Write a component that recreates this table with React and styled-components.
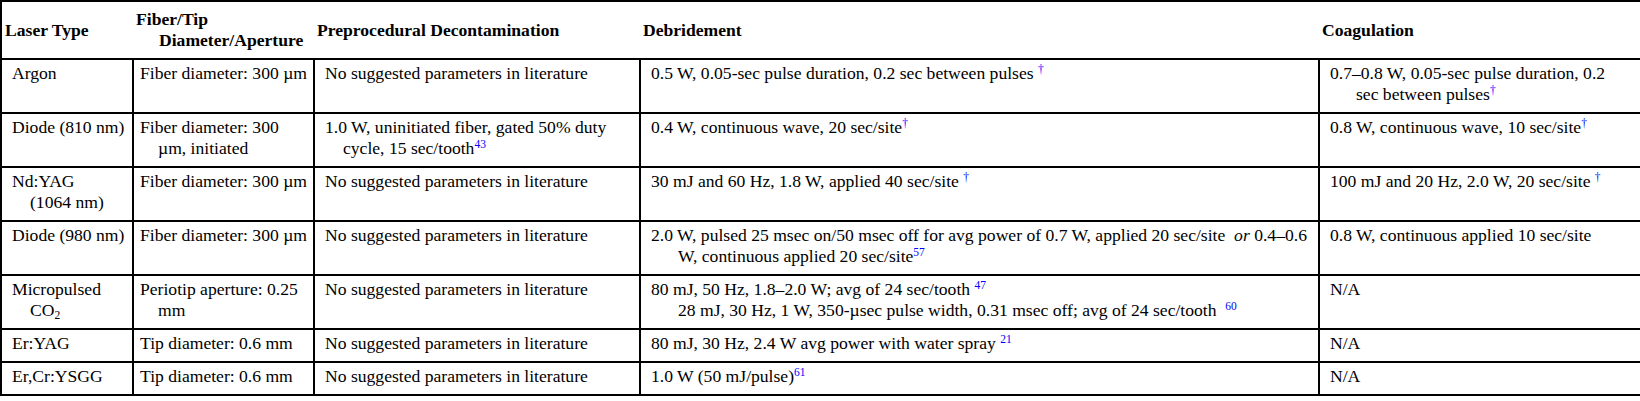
import styled, { createGlobalStyle } from "styled-components";

const GlobalStyle = createGlobalStyle`
  html, body {
    margin: 0;
    padding: 0;
    background: #fff;
  }
  body {
    font-family: "Liberation Serif", "Times New Roman", serif;
    color: #000;
  }
`;

const Table = styled.table`
  width: 1640px;
  table-layout: fixed;
  border-collapse: collapse;
  border: 2px solid #000;
  font-size: 17.6px;
  line-height: 21px;
`;

const Th = styled.th`
  text-align: left;
  font-weight: bold;
  vertical-align: middle;
  padding: 7px 4px 7px ${(p) => 3 + (p.$hang || 0)}px;
  text-indent: ${(p) => -(p.$hang || 0)}px;
  border-bottom: 2px solid #000;
`;

const Td = styled.td`
  vertical-align: top;
  border: 2px solid #000;
  padding: 3px ${(p) => p.$right ?? 4}px 7px ${(p) => (p.$pad ?? 10) + (p.$hang || 0)}px;
  text-indent: ${(p) => -(p.$hang || 0)}px;
`;

// blue footnote marks
const Ref = styled.sup`
  color: #0000ff;
  font-size: 11.5px;
  line-height: 0;
  vertical-align: 6px;
`;

const Sub = styled.sub`
  font-size: 11.5px;
  line-height: 0;
  vertical-align: -3px;
`;

const widths = [132, 181, 326, 679, 322];

const rows = [
  {
    type: "Argon",
    fiber: "Fiber diameter: 300 µm",
    decon: "No suggested parameters in literature",
    debr: <>0.5 W, 0.05-sec pulse duration, 0.2 sec between pulses <Ref>†</Ref></>,
    coag: <>0.7–0.8 W, 0.05-sec pulse duration, 0.2 sec between pulses<Ref>†</Ref></>,
  },
  {
    type: "Diode (810 nm)",
    fiber: "Fiber diameter: 300 µm, initiated",
    decon: <>1.0 W, uninitiated fiber, gated 50% duty cycle, 15 sec/tooth<Ref>43</Ref></>,
    debr: <>0.4 W, continuous wave, 20 sec/site<Ref>†</Ref></>,
    coag: <>0.8 W, continuous wave, 10 sec/site<Ref>†</Ref></>,
  },
  {
    type: "Nd:YAG (1064\u00a0nm)",
    fiber: "Fiber diameter: 300 µm",
    decon: "No suggested parameters in literature",
    debr: <>30 mJ and 60 Hz, 1.8 W, applied 40 sec/site <Ref>†</Ref></>,
    coag: <>100 mJ and 20 Hz, 2.0 W, 20 sec/site <Ref>†</Ref></>,
  },
  {
    type: "Diode (980 nm)",
    fiber: "Fiber diameter: 300 µm",
    decon: "No suggested parameters in literature",
    debr: (
      <>
        2.0 W, pulsed 25 msec on/50 msec off for avg power of 0.7 W, applied 20 sec/site&nbsp; <i>or</i> 0.4–0.6 W,
        continuous applied 20 sec/site<Ref>57</Ref>
      </>
    ),
    coag: "0.8 W, continuous applied 10 sec/site",
  },
  {
    type: <>Micropulsed CO<Sub>2</Sub></>,
    fiber: "Periotip aperture: 0.25 mm",
    decon: "No suggested parameters in literature",
    debr: (
      <>
        80 mJ, 50 Hz, 1.8–2.0 W; avg of 24 sec/tooth <Ref>47</Ref>
        <br />
        28 mJ, 30 Hz, 1 W, 350-µsec pulse width, 0.31 msec off; avg of 24 sec/tooth&nbsp; <Ref>60</Ref>
      </>
    ),
    coag: "N/A",
  },
  {
    type: "Er:YAG",
    fiber: "Tip diameter: 0.6 mm",
    decon: "No suggested parameters in literature",
    debr: <>80 mJ, 30 Hz, 2.4 W avg power with water spray <Ref>21</Ref></>,
    coag: "N/A",
  },
  {
    type: "Er,Cr:YSGG",
    fiber: "Tip diameter: 0.6 mm",
    decon: "No suggested parameters in literature",
    debr: <>1.0 W (50 mJ/pulse)<Ref>61</Ref></>,
    coag: "N/A",
  },
];

export default function App() {
  return (
    <>
      <GlobalStyle />
      <Table>
        <colgroup>
          {widths.map((w, i) => (
            <col key={i} style={{ width: w }} />
          ))}
        </colgroup>
        <thead>
          <tr>
            <Th>Laser Type</Th>
            <Th $hang={23}>Fiber/Tip Diameter/Aperture</Th>
            <Th>Preprocedural Decontamination</Th>
            <Th>Debridement</Th>
            <Th>Coagulation</Th>
          </tr>
        </thead>
        <tbody>
          {rows.map((r, i) => (
            <tr key={i}>
              <Td $hang={18}>{r.type}</Td>
              <Td $pad={6} $hang={18}>{r.fiber}</Td>
              <Td $hang={18}>{r.decon}</Td>
              <Td $hang={27}>{r.debr}</Td>
              <Td $hang={26} $right={14}>{r.coag}</Td>
            </tr>
          ))}
        </tbody>
      </Table>
    </>
  );
}
